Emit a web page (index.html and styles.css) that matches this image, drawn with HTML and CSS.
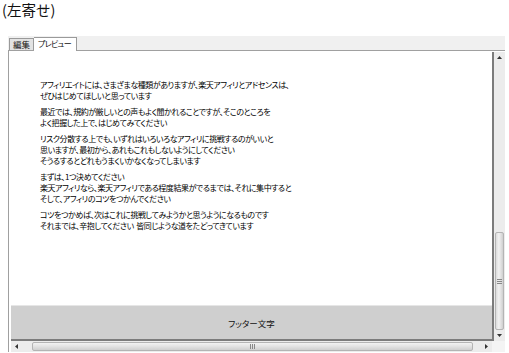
FILE: index.html
```html
<!DOCTYPE html>
<html lang="ja">
<head>
  <meta charset="UTF-8" />
  <title>プレビュー</title>
  <link rel="stylesheet" href="styles.css">
</head>
<body>
  <div class="title">(左寄せ)</div>

  <div class="tabs">
    <div class="tab">編集</div>
    <div class="tab active">プレビュー</div>
  </div>

  <div class="panel">
    <div class="frame">
      <div class="view">
        <div class="content">
          <p>アフィリエイトには、さまざまな種類がありますが、楽天アフィリとアドセンスは、<br>ぜひはじめてほしいと思っています</p>
          <p>最近では、規約が厳しいとの声もよく聞かれることですが、そこのところを<br>よく把握した上で、はじめてみてください</p>
          <p>リスク分散する上でも、いずれはいろいろなアフィリに挑戦するのがいいと<br>思いますが、最初から、あれもこれもしないようにしてください<br>そうるするとどれもうまくいかなくなってしまいます</p>
          <p>まずは、1つ決めてください<br>楽天アフィリなら、楽天アフィリである程度結果がでるまでは、それに集中すると<br>そして、アフィリのコツをつかんでください</p>
          <p>コツをつかめば、次はこれに挑戦してみようかと思うようになるものです<br>それまでは、辛抱してください&nbsp;&nbsp;皆同じような道をたどってきています</p>
        </div>
        <div class="footer">フッター文字</div>
      </div>
      <div class="vscroll">
        <div class="arrow">
          <svg width="5" height="3" viewBox="0 0 5 3"><path d="M0 3 L2.5 0 L5 3 Z" fill="#333"/></svg>
        </div>
        <div class="vtrack">
          <div class="vthumb">
            <svg width="5" height="5" viewBox="0 0 5 5"><path d="M0 0.5h5M0 2.5h5M0 4.5h5" stroke="#888" stroke-width="1"/></svg>
          </div>
        </div>
        <div class="arrow">
          <svg width="5" height="3" viewBox="0 0 5 3"><path d="M0 0 L2.5 3 L5 0 Z" fill="#333"/></svg>
        </div>
      </div>
    </div>
    <div class="hscroll">
      <div class="harrow">
        <svg width="3" height="5" viewBox="0 0 3 5"><path d="M3 0 L0 2.5 L3 5 Z" fill="#333"/></svg>
      </div>
      <div class="htrack">
        <div class="hthumb">
          <svg width="5" height="5" viewBox="0 0 5 5"><path d="M0.5 0v5M2.5 0v5M4.5 0v5" stroke="#888" stroke-width="1"/></svg>
        </div>
      </div>
      <div class="harrow">
        <svg width="3" height="5" viewBox="0 0 3 5"><path d="M0 0 L3 2.5 L0 5 Z" fill="#333"/></svg>
      </div>
      <div class="corner"></div>
    </div>
  </div>
</body>
</html>
```

FILE: styles.css
```css
body {
  margin: 0;
  font-family: "Noto Sans CJK JP", sans-serif;
  color: #111;
  background: #fff;
}
.title {
  font-size: 14.5px;
  line-height: 16px;
  padding: 2px 0 0 2px;
  height: 18px;
}
.tabs {
  display: flex;
  align-items: flex-end;
  margin: 16px 4px 0 8px;
  padding-left: 1px;
  height: 14px;
  background: #f0f0f0;
  border-bottom: 1px solid #a0a0a0;
}
.tab {
  font-size: 8.5px;
  line-height: 11px;
  height: 11px;
  padding: 0 3px;
  background: #e3e3e3;
  border: 1px solid #9a9a9a;
  border-bottom: none;
  font-feature-settings: "palt";
}
.tab.active {
  background: #fff;
  height: 13px;
  margin-bottom: -1px;
  padding: 0 5px 0 4px;
  border-left: none;
  font-size: 8px;
  letter-spacing: -0.7px;
}
.panel {
  margin: 0 4px 0 8px;
  border-left: 1px solid #a0a0a0;
  padding-left: 2px;
  height: 301px;
  display: flex;
  flex-direction: column;
}
.frame {
  display: flex;
  flex: 1;
  padding-top: 1px;
}
.view {
  flex: 1;
  display: flex;
  flex-direction: column;
  border-right: 2px solid #7c7c7c;
  border-bottom: 2px solid #7c7c7c;
}
.content {
  flex: 1;
  padding: 27px 0 0 29px;
  font-size: 8px;
  line-height: 11px;
  font-feature-settings: "palt";
  letter-spacing: -0.45px;
  color: #000;
}
.content p {
  margin: 0 0 5px;
}
.footer {
  height: 33px;
  background: #cfcfcf;
  border-top: 1px solid #e6e6e6;
  font-size: 8.5px;
  font-feature-settings: "palt";
  display: flex;
  align-items: center;
  justify-content: center;
}
.vscroll {
  width: 11px;
  background: #ececec;
  display: flex;
  flex-direction: column;
}
.arrow {
  height: 11px;
  display: flex;
  align-items: center;
  justify-content: center;
}
.vtrack {
  flex: 1;
  display: flex;
  flex-direction: column;
  justify-content: flex-end;
}
.vthumb {
  height: 96px;
  margin: 0 1px;
  background: linear-gradient(to right, #dcdcdc, #f2f2f2 40%, #cfcfcf);
  border: 1px solid #b4b4b4;
  border-radius: 2px;
  display: flex;
  align-items: center;
  justify-content: center;
}
.hscroll {
  height: 11px;
  display: flex;
  background: #ececec;
}
.harrow {
  width: 11px;
  display: flex;
  align-items: center;
  justify-content: center;
}
.htrack {
  flex: 1;
  padding: 1px 0;
  display: flex;
}
.hthumb {
  flex: 1;
  margin: 0 8px 0 10px;
  background: linear-gradient(#f2f2f2, #e2e2e2 50%, #cfcfcf);
  border: 1px solid #b4b4b4;
  border-radius: 2px;
  display: flex;
  align-items: center;
  justify-content: center;
}
.corner {
  width: 13px;
  background: #f4f4f4;
}
```
